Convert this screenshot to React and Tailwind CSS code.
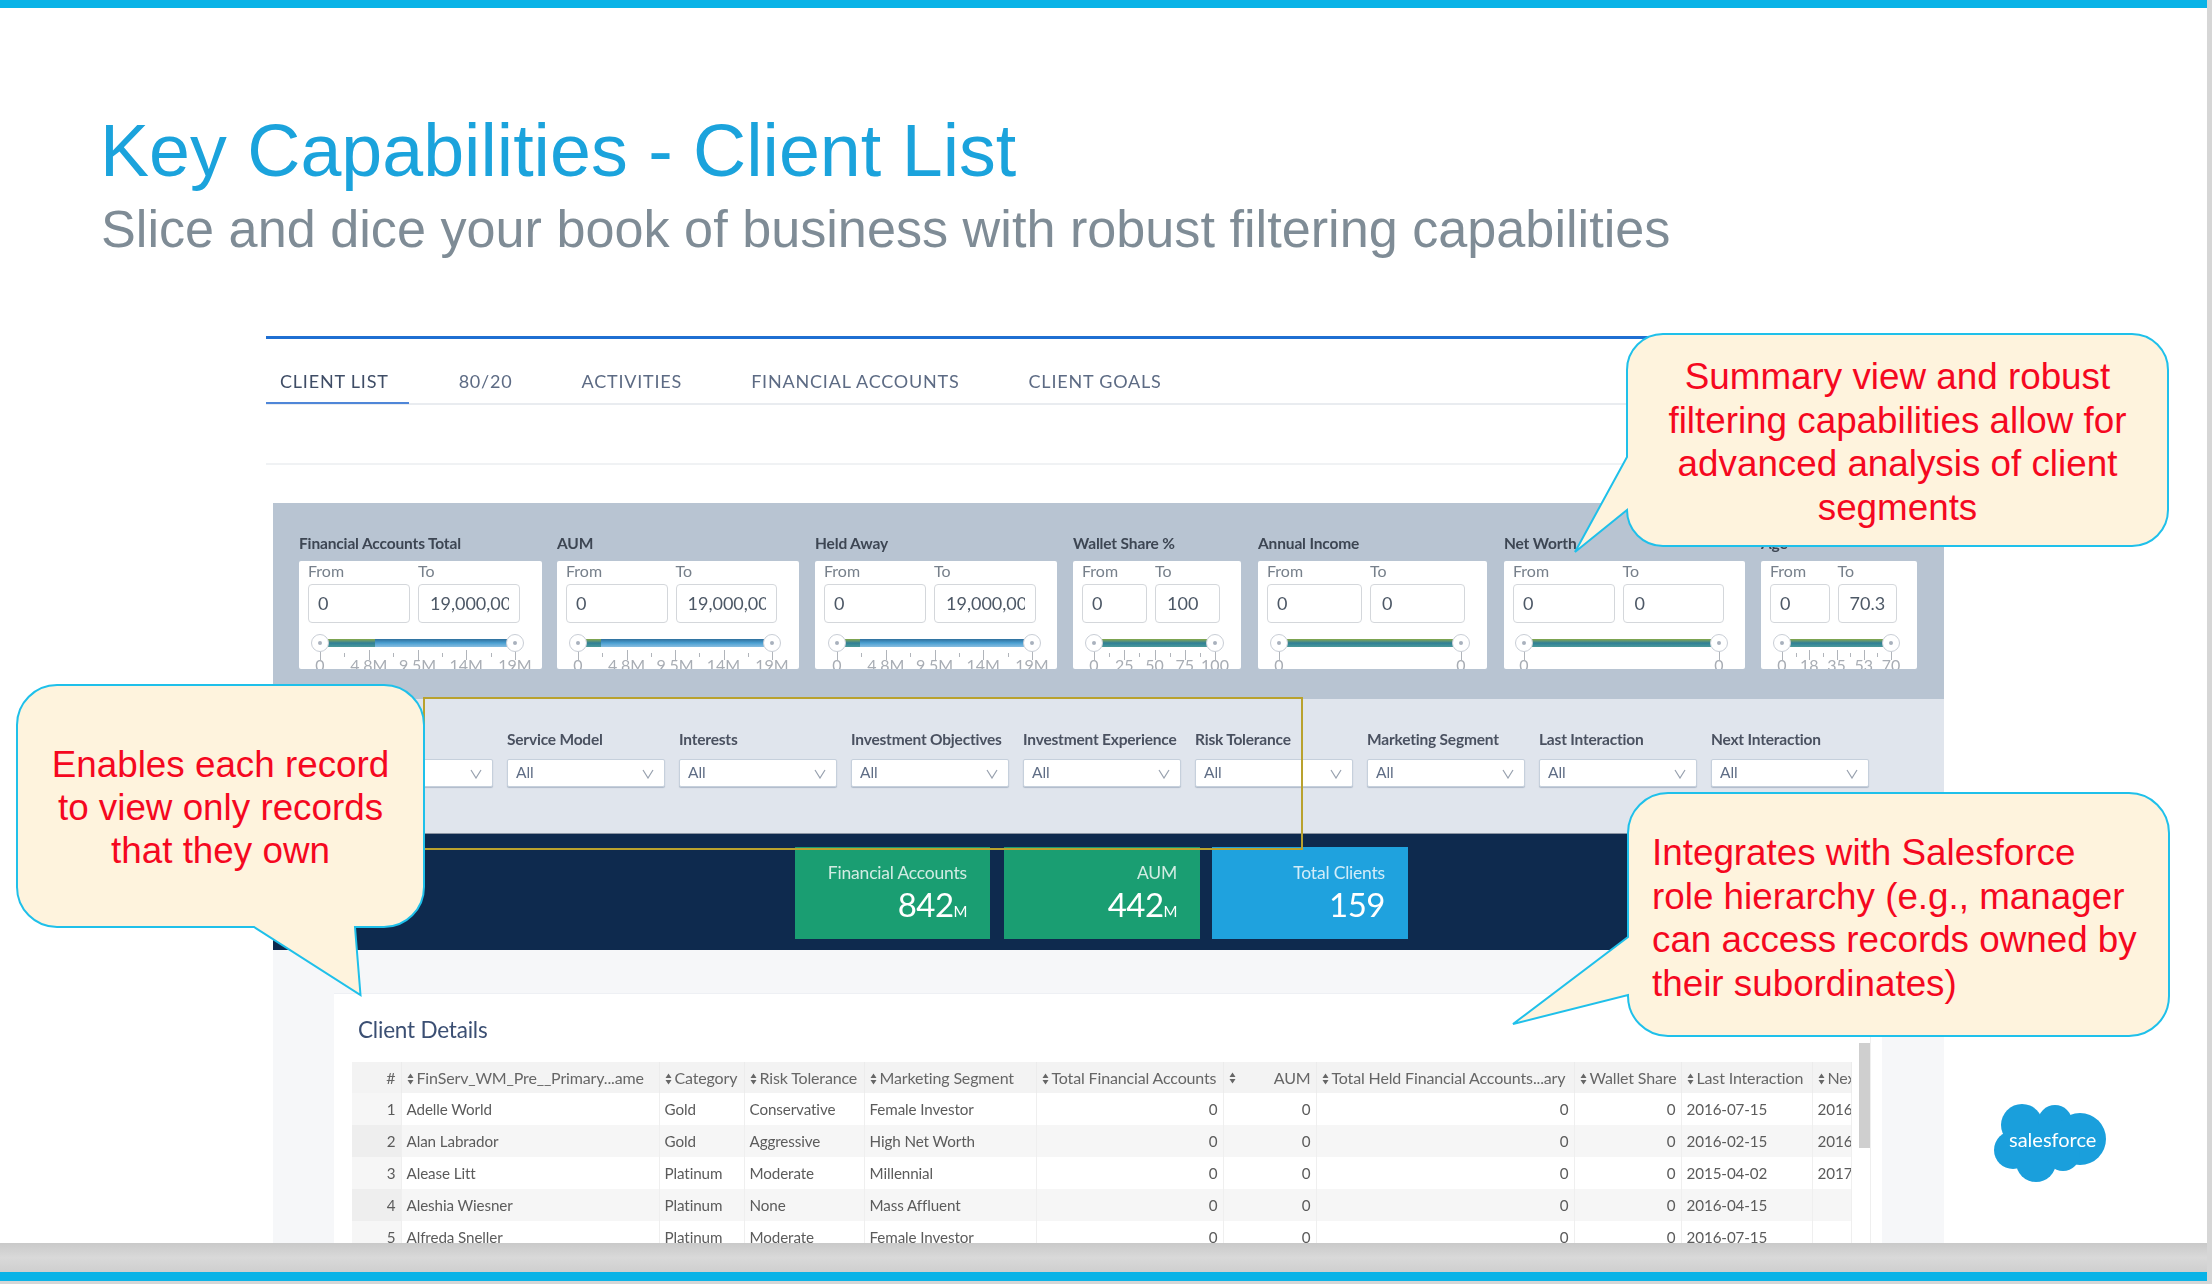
import React from "react";

const lato = "font-['Lato',sans-serif]";
const arial = "font-['Liberation_Sans',sans-serif]";

const tabs = [
  { t: "CLIENT LIST", c: "relative pl-[14px] pr-[20px] text-[#3f4d66]", active: true },
  { t: "80/20", c: "ml-[50px] text-[#5d6b84]" },
  { t: "ACTIVITIES", c: "ml-[69px] text-[#5d6b84]" },
  { t: "FINANCIAL ACCOUNTS", c: "ml-[69px] text-[#5d6b84]" },
  { t: "CLIENT GOALS", c: "ml-[69px] text-[#5d6b84]" },
];

const M = ["0", "4.8M", "9.5M", "14M", "19M"];
const ranges = [
  { label: "Financial Accounts Total", w: "w-[243px]", m: "", grid: "w-[212px]", to: "19,000,00", a: 21, b: 216, g: 76, marks: M },
  { label: "AUM", w: "w-[242px]", m: "ml-[15px]", grid: "w-[211px]", to: "19,000,00", a: 21, b: 215, g: 44, marks: M },
  { label: "Held Away", w: "w-[242px]", m: "ml-[16px]", grid: "w-[212px]", to: "19,000,00", a: 22, b: 217, g: 45, marks: M },
  { label: "Wallet Share %", w: "w-[168px]", m: "ml-[16px]", grid: "w-[138px]", to: "100", a: 21, b: 142, g: null, marks: ["0", "25", "50", "75", "100"] },
  { label: "Annual Income", w: "w-[229px]", m: "ml-[17px]", grid: "w-[198px]", to: "0", a: 21, b: 203, g: null, marks: ["0", "0"] },
  { label: "Net Worth", w: "w-[241px]", m: "ml-[17px]", grid: "w-[211px]", to: "0", a: 20, b: 215, g: null, marks: ["0", "0"] },
  { label: "Age", w: "w-[156px]", m: "ml-[16px]", grid: "w-[127px]", to: "70.3", a: 21, b: 130, g: null, marks: ["0", "18", "35", "53", "70"] },
];

function Handle({ x }) {
  return (
    <div className="absolute top-[11px] w-[18px] h-[18px] -ml-[9px] rounded-full bg-white border border-[#c9ced6] flex items-center justify-center" style={{ left: x }}>
      <div className="w-[4px] h-[4px] rounded-full bg-[#a9b1bd]" />
    </div>
  );
}

function Slider({ a, b, g, marks }) {
  const span = b - a;
  const n = marks.length;
  const full = g == null;
  return (
    <div className="relative h-[46px]">
      <div className="absolute top-[16px] h-[8px] bg-gradient-to-b from-[#2f6f9c] via-[#4aa0d2] to-[#86bde0]" style={{ left: a + 8, width: span - 16 }} />
      <div className="absolute top-[16px] h-[8px] bg-gradient-to-b from-[#86a83f] via-[#2f7f96] to-[#4b9a9a]" style={{ left: a + 8, width: (full ? b - 8 : g) - a - 8 }} />
      {marks.map((m, i) => {
        const x = a + (span * i) / Math.max(n - 1, 1);
        return (
          <React.Fragment key={i}>
            <div className="absolute top-[27px] w-px h-[10px] bg-[#b0b4ba]" style={{ left: x }} />
            <div className={`absolute top-[33px] -translate-x-1/2 text-[16px] leading-[18px] text-[#a8adb4] whitespace-nowrap ${lato}`} style={{ left: x }}>{m}</div>
            {i < n - 1 && n > 2 ? <div className="absolute top-[30px] w-px h-[4px] bg-[#b0b4ba]" style={{ left: x + span / (n - 1) / 2 }} /> : null}
          </React.Fragment>
        );
      })}
      <Handle x={a} />
      <Handle x={b} />
    </div>
  );
}

function RangeFilter({ r }) {
  return (
    <div className={`${r.w} ${r.m} shrink-0`}>
      <div className="h-[20px] leading-[20px] text-[15.5px] font-bold text-[#3d4653] tracking-[-0.15px] whitespace-nowrap">{r.label}</div>
      <div className="mt-[8px] h-[108px] bg-white rounded-[2px] overflow-hidden">
        <div className={`${r.grid} ml-[9px] grid grid-cols-2 gap-x-[8px]`}>
          <div className="h-[23px] leading-[20px] text-[16px] text-[#77808b]">From</div>
          <div className="h-[23px] leading-[20px] text-[16px] text-[#77808b]">To</div>
          <div className="h-[39px] border border-[#d4d7db] rounded-[4px] pl-[9px] leading-[37px] text-[18px] text-[#4d5866]">0</div>
          <div className="h-[39px] border border-[#d4d7db] rounded-[4px] pl-[11px] pr-[10px] leading-[37px] text-[18px] text-[#4d5866]">
            <div className="overflow-hidden whitespace-nowrap">{r.to}</div>
          </div>
        </div>
        <Slider a={r.a} b={r.b} g={r.g} marks={r.marks} />
      </div>
    </div>
  );
}

const selects = ["", "Service Model", "Interests", "Investment Objectives", "Investment Experience", "Risk Tolerance", "Marketing Segment", "Last Interaction", "Next Interaction"];

function Select({ label }) {
  return (
    <div className="w-[158px] shrink-0">
      <div className="h-[20px] leading-[20px] text-[15.5px] font-bold text-[#4a5160] tracking-[-0.2px] whitespace-nowrap">{label}</div>
      <div className="mt-[10px] h-[28px] bg-white border border-[#c6d0dc] rounded-[2px] flex items-center justify-between pl-[8px] pr-[10px] shadow-[0_1px_1px_#aeb9c8]">
        <span className="text-[15.5px] text-[#5f6d85]">All</span>
        <svg width="12" height="10" viewBox="0 0 12 10" className="mt-[2px]">
          <path d="M1 1 L6 9 L11 1" fill="none" stroke="#98a1ae" strokeWidth="1.2" />
        </svg>
      </div>
    </div>
  );
}

function Tile({ label, value, unit, c }) {
  return (
    <div className={`${c} h-[92px] pr-[23px] pt-[15px] text-right text-white shrink-0`}>
      <div className="text-[17.5px] leading-[22px] text-white/80 tracking-[-0.2px]">{label}</div>
      <div className="text-[33px] leading-[40px] tracking-[-0.5px]">
        {value}
        {unit ? <span className="text-[15px]">{unit}</span> : null}
      </div>
    </div>
  );
}

function Sort() {
  return (
    <svg width="7" height="12" viewBox="0 0 7 12" className="inline-block mr-[3px] align-[-1px] shrink-0">
      <path d="M3.5 0.5 L6.5 5 H0.5 Z M3.5 11.5 L6.5 7 H0.5 Z" fill="#666" />
    </svg>
  );
}

const colW = ["w-[49px]", "w-[258px]", "w-[85px]", "w-[120px]", "w-[172px]", "w-[187px]", "w-[93px]", "w-[258px]", "w-[107px]", "w-[131px]", "w-[39px]"];

const rows = [
  [1, "Adelle World", "Gold", "Conservative", "Female Investor", "2016-07-15", "2016-10-15"],
  [2, "Alan Labrador", "Gold", "Aggressive", "High Net Worth", "2016-02-15", "2016-08-15"],
  [3, "Alease Litt", "Platinum", "Moderate", "Millennial", "2015-04-02", "2017-01-15"],
  [4, "Aleshia Wiesner", "Platinum", "None", "Mass Affluent", "2016-04-15", ""],
  [5, "Alfreda Sneller", "Platinum", "Moderate", "Female Investor", "2016-07-15", ""],
];

const th = "h-[31px] px-[5px] font-normal text-left text-[16px] border-r border-[#ececec] overflow-hidden whitespace-nowrap tracking-[-0.15px]";
const td = "px-[5px] border-r border-[#efefef] overflow-hidden whitespace-nowrap tracking-[-0.1px]";

function ClientTable() {
  return (
    <table className={`table-fixed w-[1499px] border-collapse text-[15.2px] text-[#5b5b5b] ${lato}`}>
      <colgroup>{colW.map((c, i) => <col key={i} className={c} />)}</colgroup>
      <thead>
        <tr className="bg-[#f3f3f3] text-[#666]">
          <th className={`${th} text-right`}>#</th>
          <th className={th}><Sort />FinServ_WM_Pre__Primary...ame</th>
          <th className={th}><Sort />Category</th>
          <th className={th}><Sort />Risk Tolerance</th>
          <th className={th}><Sort />Marketing Segment</th>
          <th className={th}><Sort />Total Financial Accounts</th>
          <th className={th}>
            <div className="flex justify-between items-center"><Sort /><span>AUM</span></div>
          </th>
          <th className={th}><Sort />Total Held Financial Accounts...ary</th>
          <th className={th}><Sort />Wallet Share</th>
          <th className={th}><Sort />Last Interaction</th>
          <th className={th}><Sort />Next</th>
        </tr>
      </thead>
      <tbody>
        {rows.map((r) => (
          <tr key={r[0]} className={`h-[32px] ${r[0] % 2 === 0 ? "bg-[#f6f6f6]" : "bg-white"}`}>
            <td className={`${td} text-right ${r[0] % 2 === 0 ? "bg-[#eeeeee]" : "bg-[#f6f6f6]"}`}>{r[0]}</td>
            <td className={td}>{r[1]}</td>
            <td className={td}>{r[2]}</td>
            <td className={td}>{r[3]}</td>
            <td className={td}>{r[4]}</td>
            <td className={`${td} text-right`}>0</td>
            <td className={`${td} text-right`}>0</td>
            <td className={`${td} text-right`}>0</td>
            <td className={`${td} text-right`}>0</td>
            <td className={td}>{r[5]}</td>
            <td className={td}>{r[6]}</td>
          </tr>
        ))}
      </tbody>
    </table>
  );
}

function Embed() {
  return (
    <div className={`ml-[266px] w-[1678px] shrink-0 border-t-[3px] border-[#1f6fd2] blur-[0.7px] ${lato}`}>
      <div className="h-[66px] border-b-2 border-[#e9ecf0] flex items-end text-[18px] tracking-[0.8px]">
        {tabs.map((t) => (
          <div key={t.t} className={`${t.c} h-[64px] pt-[30px] leading-[24px] whitespace-nowrap`}>
            {t.t}
            {t.active ? <div className="absolute left-0 right-0 bottom-[-1px] h-[2px] bg-[#4f86d8]" /> : null}
          </div>
        ))}
      </div>
      <div className="h-[60px] border-b-2 border-[#f0f2f4]" />
      <div className="ml-[7px] mt-[38px]">
        <div className="h-[196px] bg-[#b8c4d2] pl-[26px] pt-[30px] flex">
          {ranges.map((r) => <RangeFilter key={r.label} r={r} />)}
        </div>
        <div className="h-[135px] bg-[#e0e5ed] pl-[62px] pt-[30px] flex gap-x-[14px] border-b border-[#8a94a3]">
          {selects.map((s, i) => <Select key={i} label={s} />)}
        </div>
        <div className="h-[116px] bg-[#0e2a4e] pl-[522px] pt-[13px] flex">
          <Tile label="Financial Accounts" value="842" unit="M" c="w-[195px] bg-[#1a9e72]" />
          <Tile label="AUM" value="442" unit="M" c="w-[196px] ml-[14px] bg-[#1a9e72]" />
          <Tile label="Total Clients" value="159" c="w-[196px] ml-[12px] bg-[#1fa2de]" />
        </div>
        <div className="bg-[#f6f7f9] pl-[61px] pr-[62px] pt-[43px] h-[400px]">
          <div className="relative bg-white h-[340px] pl-[18px] pt-[22px] border-t border-[#eef0f4]">
            <div className="ml-[6px] text-[22.5px] leading-[28px] text-[#3b4f73] tracking-[-0.2px]">Client Details</div>
            <div className="mt-[18px]"><ClientTable /></div>
            <div className="absolute top-[49px] right-[12px] w-[11px] h-[105px] bg-[#cfcfcf]" />
            <div className="absolute top-0 bottom-0 right-[11px] w-px bg-[#efefef]" />
          </div>
        </div>
      </div>
    </div>
  );
}

function Logo() {
  return (
    <svg width="113" height="78" viewBox="0 0 113 78" className="ml-[49px] mt-[768px] shrink-0 blur-[0.4px]">
      <g fill="#1a9fdc">
        <circle cx="29" cy="21" r="21" />
        <circle cx="62" cy="18" r="17" />
        <circle cx="87" cy="35" r="26" />
        <circle cx="20" cy="46" r="19" />
        <circle cx="43" cy="58" r="20" />
        <circle cx="70" cy="50" r="17" />
        <rect x="20" y="20" width="60" height="36" />
      </g>
      <text x="16" y="43" fill="#fff" fontFamily="Lato, sans-serif" fontSize="20">salesforce</text>
    </svg>
  );
}

function Callouts() {
  const fill = "#fef3dd";
  const stroke = "#1fc0ea";
  return (
    <>
      <div className="absolute left-[1570px] top-[330px]">
        <svg width="605" height="228" viewBox="1570 330 605 228" className="block">
          <path d="M1663 334 H2132 A36 36 0 0 1 2168 370 V510 A36 36 0 0 1 2132 546 H1663 A36 36 0 0 1 1627 510 L1575 552 L1627 457 V370 A36 36 0 0 1 1663 334 Z" fill={fill} stroke={stroke} strokeWidth="2" />
        </svg>
      </div>
      <div className={`absolute left-[1627px] top-[355px] w-[541px] text-center text-[36.8px] leading-[43.5px] text-[#f5081f] ${arial}`}>
        Summary view and robust<br />filtering capabilities allow for<br />advanced analysis of client<br />segments
      </div>

      <div className="absolute left-[10px] top-[680px]">
        <svg width="420" height="320" viewBox="10 680 420 320" className="block">
          <path d="M57 685 H384 A40 40 0 0 1 424 725 V887 A40 40 0 0 1 384 927 H355 L360.5 995 L254 927 H57 A40 40 0 0 1 17 887 V725 A40 40 0 0 1 57 685 Z" fill={fill} stroke={stroke} strokeWidth="2" />
        </svg>
      </div>
      <div className={`absolute left-[17px] top-[743px] w-[407px] text-center text-[36.8px] leading-[43px] text-[#f5081f] ${arial}`}>
        Enables each record<br />to view only records<br />that they own
      </div>

      <div className="absolute left-[1508px] top-[788px]">
        <svg width="667" height="254" viewBox="1508 788 667 254" className="block">
          <path d="M1668 793 H2129 A40 40 0 0 1 2169 833 V996 A40 40 0 0 1 2129 1036 H1668 A40 40 0 0 1 1628 996 V995 L1513 1024 L1628 937 V833 A40 40 0 0 1 1668 793 Z" fill={fill} stroke={stroke} strokeWidth="2" />
        </svg>
      </div>
      <div className={`absolute left-[1652px] top-[831px] w-[517px] text-[36.8px] leading-[43.5px] text-[#f5081f] ${arial}`}>
        Integrates with Salesforce<br />role hierarchy (e.g., manager<br />can access records owned by<br />their subordinates)
      </div>
    </>
  );
}

export default function App() {
  return (
    <div className={`relative w-[2212px] h-[1284px] overflow-hidden bg-[#d6d6d6] ${arial}`}>
      <div className="w-[2207px] h-[1243px] bg-white overflow-hidden">
        <div className="h-[8px] bg-[#09b3e7]" />
        <div className="pl-[100px] pt-[101px]">
          <div className="h-[84px] text-[73.6px] leading-[84px] text-[#1ba3dc] whitespace-nowrap">Key Capabilities - Client List</div>
          <div className="h-[60px] ml-px mt-[6px] text-[52.2px] leading-[60px] text-[#7f8c96] whitespace-nowrap">Slice and dice your book of business with robust filtering capabilities</div>
        </div>
        <div className="flex mt-[77px]">
          <Embed />
          <Logo />
        </div>
      </div>
      <div className="w-[2207px] h-[29px] bg-gradient-to-b from-[#c9c9c9] via-[#d9d9d9] to-[#cfcfcf]" />
      <div className="w-[2207px] h-[9px] bg-[#09b3e7]" />
      <div className="absolute left-[423px] top-[697px] w-[880px] h-[153px] border-2 border-[#b9a22e]" />
      <Callouts />
    </div>
  );
}
